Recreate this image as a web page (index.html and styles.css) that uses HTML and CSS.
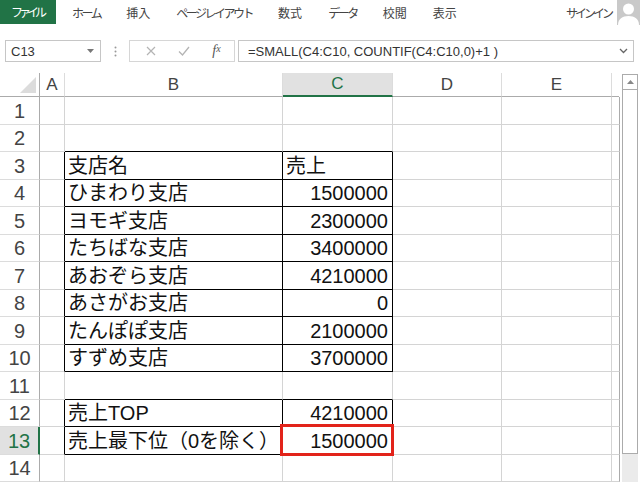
FILE: index.html
```html
<!DOCTYPE html>
<html lang="ja">
<head>
    <meta charset="UTF-8">
    <title>SMALL関数 - Excel</title>
    <link rel="stylesheet" href="styles.css">
</head>
<body>
    <div class="tabs">
        <div class="file kana">ファイル</div>
        <div class="tab-list">
            <span class="kana">ホーム</span>
            <span>挿入</span>
            <span class="kana">ページ レイアウト</span>
            <span>数式</span>
            <span class="kana">データ</span>
            <span>校閲</span>
            <span>表示</span>
        </div>
        <div class="account">
            <span class="signin">サインイン</span>
            <svg class="user-pic" width="23" height="25" viewBox="0 0 23 25"><rect width="23" height="25" fill="#c9c9c9"/><circle cx="11.5" cy="9" r="5.5" fill="#fff"/><path d="M1 25c0-6 4.5-9 10.5-9S22 19 22 25z" fill="#fff"/></svg>
        </div>
    </div>

    <div class="formula-bar">
        <div class="namebox">
            <span>C13</span>
            <svg width="7" height="4" viewBox="0 0 7 4"><path d="M0 0h7L3.5 4z" fill="#777"/></svg>
        </div>
        <div class="grip">
            <svg width="3" height="11" viewBox="0 0 3 11"><circle cx="1.5" cy="1.5" r="1" fill="#999"/><circle cx="1.5" cy="5.5" r="1" fill="#999"/><circle cx="1.5" cy="9.5" r="1" fill="#999"/></svg>
        </div>
        <div class="fx-buttons">
            <span><svg width="10" height="10" viewBox="0 0 10 10"><path d="M1 1l8 8M9 1l-8 8" stroke="#b4b4b4" stroke-width="1.2"/></svg></span>
            <span><svg width="12" height="10" viewBox="0 0 12 10"><path d="M1 5.5l3.5 3.5L11 1" stroke="#b4b4b4" stroke-width="1.3" fill="none"/></svg></span>
            <span class="fx">f<small>x</small></span>
        </div>
        <div class="formula">
            <span>=SMALL(C4:C10, COUNTIF(C4:C10,0)+1 )</span>
            <svg width="9" height="6" viewBox="0 0 9 6"><path d="M1 1l3.5 3.5L8 1" stroke="#666" stroke-width="1.3" fill="none"/></svg>
        </div>
    </div>

    <div class="sheet-wrap">
        <div class="sheet">
            <div class="row hd">
                <div class="corner"></div><div>A</div><div>B</div><div class="sel">C</div><div>D</div><div>E</div><div class="stub"></div>
            </div>
            <div class="row"><div class="rh">1</div><div class="c"></div><div class="c"></div><div class="c"></div><div class="c"></div><div class="c"></div><div class="c end"></div></div>
            <div class="row"><div class="rh">2</div><div class="c"></div><div class="c tt"></div><div class="c tt"></div><div class="c"></div><div class="c"></div><div class="c end"></div></div>
            <div class="row"><div class="rh">3</div><div class="c tl"></div><div class="c t">支店名</div><div class="c t">売上</div><div class="c"></div><div class="c"></div><div class="c end"></div></div>
            <div class="row"><div class="rh">4</div><div class="c tl"></div><div class="c t">ひまわり支店</div><div class="c t num">1500000</div><div class="c"></div><div class="c"></div><div class="c end"></div></div>
            <div class="row"><div class="rh">5</div><div class="c tl"></div><div class="c t">ヨモギ支店</div><div class="c t num">2300000</div><div class="c"></div><div class="c"></div><div class="c end"></div></div>
            <div class="row"><div class="rh">6</div><div class="c tl"></div><div class="c t">たちばな支店</div><div class="c t num">3400000</div><div class="c"></div><div class="c"></div><div class="c end"></div></div>
            <div class="row"><div class="rh">7</div><div class="c tl"></div><div class="c t">あおぞら支店</div><div class="c t num">4210000</div><div class="c"></div><div class="c"></div><div class="c end"></div></div>
            <div class="row"><div class="rh">8</div><div class="c tl"></div><div class="c t">あさがお支店</div><div class="c t num">0</div><div class="c"></div><div class="c"></div><div class="c end"></div></div>
            <div class="row"><div class="rh">9</div><div class="c tl"></div><div class="c t">たんぽぽ支店</div><div class="c t num">2100000</div><div class="c"></div><div class="c"></div><div class="c end"></div></div>
            <div class="row"><div class="rh">10</div><div class="c tl"></div><div class="c t">すずめ支店</div><div class="c t num">3700000</div><div class="c"></div><div class="c"></div><div class="c end"></div></div>
            <div class="row"><div class="rh">11</div><div class="c"></div><div class="c tt"></div><div class="c tt"></div><div class="c"></div><div class="c"></div><div class="c end"></div></div>
            <div class="row"><div class="rh">12</div><div class="c tl"></div><div class="c t">売上TOP</div><div class="c t num">4210000</div><div class="c"></div><div class="c"></div><div class="c end"></div></div>
            <div class="row"><div class="rh sel">13</div><div class="c tl"></div><div class="c t">売上最下位（0を除く）</div><div class="c t num pick">1500000</div><div class="c"></div><div class="c"></div><div class="c end"></div></div>
            <div class="row"><div class="rh">14</div><div class="c"></div><div class="c"></div><div class="c"></div><div class="c"></div><div class="c"></div><div class="c end"></div></div>
        </div>
        <div class="vscroll">
            <div class="up"><svg width="7" height="4" viewBox="0 0 7 4"><path d="M0 4h7L3.5 0z" fill="#888"/></svg></div>
            <div class="thumb"></div>
            <div class="track"></div>
        </div>
    </div>
</body>
</html>
```

FILE: styles.css
```css
* {
    margin: 0;
    padding: 0;
    box-sizing: border-box;
}

body {
    width: 640px;
    height: 484px;
    overflow: hidden;
    background: #fff;
    color: #222;
    font-family: "Liberation Sans", "Noto Sans CJK JP", sans-serif;
}

/* ribbon tabs */
.tabs {
    display: flex;
    align-items: center;
    height: 25px;
    font-family: "Noto Sans CJK JP", sans-serif;
    font-size: 12px;
    color: #444;
}

.kana {
    letter-spacing: -2.5px;
}

.file {
    align-self: flex-start;
    width: 56px;
    height: 24px;
    line-height: 24px;
    padding-left: 11px;
    background: #217346;
    color: #fff;
    letter-spacing: -4px;
}

.tab-list {
    display: flex;
    gap: 26px;
    margin-left: 16px;
}

.account {
    display: flex;
    align-items: center;
    gap: 6px;
    height: 25px;
    margin-left: auto;
}

.signin {
    letter-spacing: -3px;
}

.user-pic {
    display: block;
    flex-shrink: 0;
}

/* formula bar */
.formula-bar {
    display: flex;
    align-items: center;
    height: 22px;
    margin: 15px 6px 11px 5px;
    font-size: 13px;
    color: #333;
}

.namebox {
    display: flex;
    align-items: center;
    justify-content: space-between;
    width: 96px;
    height: 22px;
    padding: 0 6px 0 5px;
    border: 1px solid #c6c6c6;
}

.grip {
    display: flex;
    justify-content: center;
    width: 28px;
}

.fx-buttons {
    display: flex;
    align-items: center;
    width: 106px;
    height: 22px;
    padding-left: 4px;
    margin-right: 3px;
    border: 1px solid #d6d6d6;
}

.fx-buttons span {
    display: flex;
    justify-content: center;
    width: 33px;
}

.fx {
    font-family: "Liberation Serif", serif;
    font-style: italic;
    font-size: 14px;
    color: #555;
}

.fx small {
    font-size: 10px;
}

.formula {
    flex: 1;
    display: flex;
    align-items: center;
    justify-content: space-between;
    height: 22px;
    padding: 0 5px 0 9px;
    border: 1px solid #c6c6c6;
}

/* sheet */
.sheet-wrap {
    display: flex;
}

.sheet {
    width: 619px;
}

.row {
    display: grid;
    grid-template-columns: 40px 25px 218px 110px 109px 110px 7px;
    height: 27.5px;
}

.hd {
    height: 24px;
    font-size: 17px;
    color: #444;
}

.hd div {
    display: flex;
    align-items: center;
    justify-content: center;
    border-right: 1px solid #dcdcdc;
    border-bottom: 1px solid #ababab;
}

.hd .corner {
    align-items: flex-end;
    justify-content: flex-end;
    padding: 0 3px 3px 0;
    border-right-color: #ababab;
}

.corner::before {
    content: "";
    border-left: 16px solid transparent;
    border-bottom: 16px solid #dcdcdc;
}

.hd .sel {
    background: #e1e1e1;
    color: #217346;
    border-bottom: 2px solid #217346;
}

.hd .stub {
    border-right: none;
}

.rh {
    display: flex;
    align-items: center;
    justify-content: center;
    padding-top: 2px;
    font-family: "Liberation Sans Narrow", "Liberation Sans", sans-serif;
    font-size: 20px;
    color: #444;
    border-right: 1px solid #ababab;
    border-bottom: 1px solid #dcdcdc;
}

.rh.sel {
    background: #e1e1e1;
    color: #217346;
    border-right: 2px solid #217346;
}

.c {
    display: flex;
    align-items: flex-end;
    padding: 0 4px 1px 3px;
    font-size: 20px;
    line-height: 24px;
    white-space: nowrap;
    color: #111;
    border-right: 1px solid #d4d4d4;
    border-bottom: 1px solid #d4d4d4;
}

.c.end {
    border-right-color: #ababab;
}

.num {
    justify-content: flex-end;
}

/* table borders */
.t {
    border-right-color: #000;
    border-bottom-color: #000;
}

.tl {
    border-right-color: #000;
}

.tt {
    border-bottom-color: #000;
}

/* highlighted result cell */
.pick {
    position: relative;
}

.pick::after {
    content: "";
    position: absolute;
    top: -3px;
    left: -3px;
    right: -2px;
    bottom: -2px;
    border: 3px solid #e2231a;
}

/* vertical scrollbar */
.vscroll {
    display: flex;
    flex-direction: column;
    flex-shrink: 0;
    width: 16px;
    margin: 1px 0 0 3px;
}

.up {
    display: flex;
    align-items: center;
    justify-content: center;
    height: 15px;
    border: 1px solid #ababab;
    border-bottom: none;
}

.thumb {
    height: 365px;
    border: 1px solid #ababab;
}

.track {
    flex: 1;
    background: #ebebeb;
}
```
